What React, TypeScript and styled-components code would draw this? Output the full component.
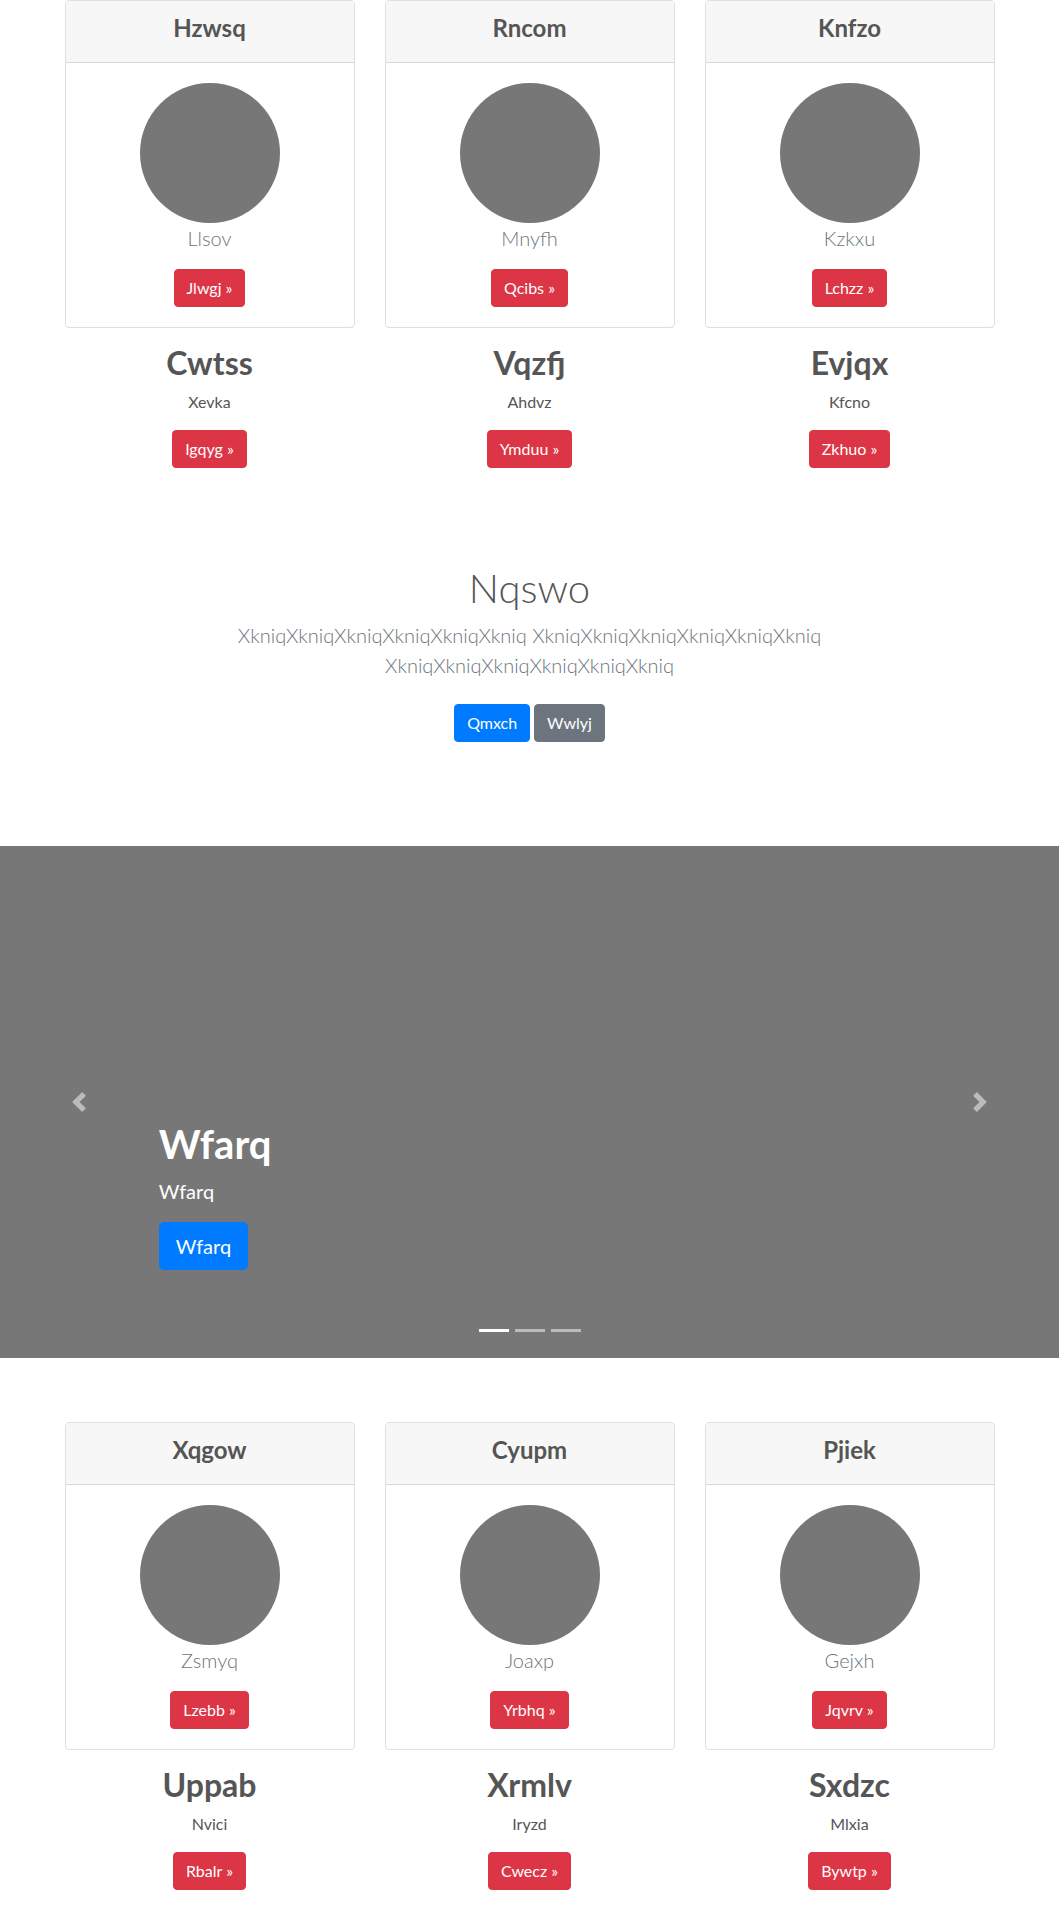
import styled, { createGlobalStyle } from 'styled-components';

const GlobalStyle = createGlobalStyle`
  * {
    box-sizing: border-box;
  }
  body {
    margin: 0;
    font-family: 'Lato', 'Open Sans', sans-serif;
    color: #555;
    background: #fff;
    line-height: 1.5;
  }
`;

const Container = styled.div`
  max-width: 960px;
  margin: 0 auto;
  padding: 0 15px;
`;

const Row = styled.div`
  display: grid;
  grid-template-columns: repeat(3, 1fr);
  column-gap: 30px;
`;

const Col = styled.div`
  text-align: center;
`;

const Card = styled.div`
  border: 1px solid rgba(0, 0, 0, 0.125);
  border-radius: 4px;
  margin-bottom: 16px;
  overflow: hidden;
`;

const CardHeader = styled.div`
  padding: 13px 20px 11px;
  background: #f7f7f7;
  border-bottom: 1px solid rgba(0, 0, 0, 0.125);
  h4 {
    margin: 0 0 8px;
    font-size: 24px;
    font-weight: 700;
    line-height: 1.2;
  }
`;

const CardBody = styled.div`
  padding: 20px;
`;

const Avatar = styled.div`
  width: 140px;
  height: 140px;
  border-radius: 50%;
  background: #777;
  margin: 0 auto;
`;

const Lead = styled.p`
  margin: 0 0 16px;
  font-size: 20px;
  font-weight: 300;
  line-height: 1.5;
  color: #6c757d;
`;

const colors = {
  danger: '#dc3545',
  primary: '#007bff',
  secondary: '#6c757d',
};

const Button = styled.a<{ $variant: keyof typeof colors; $lg?: boolean }>`
  display: inline-block;
  padding: ${(p) => (p.$lg ? '8px 16px' : '6px 12px')};
  font-size: ${(p) => (p.$lg ? '20px' : '16px')};
  line-height: 1.5;
  border-radius: ${(p) => (p.$lg ? '4.8px' : '4px')};
  border: 1px solid ${(p) => colors[p.$variant]};
  background: ${(p) => colors[p.$variant]};
  color: #fff;
  text-decoration: none;
  cursor: pointer;
`;

const Feature = styled.div`
  h2 {
    margin: 0 0 8px;
    font-size: 32px;
    font-weight: 700;
    line-height: 1.2;
  }
  p {
    margin: 0 0 16px;
  }
  p:last-child {
    margin: 0;
  }
`;

const Jumbotron = styled.section`
  padding: 96px 0;
  text-align: center;
`;

const JumboInner = styled.div`
  max-width: 600px;
  margin: 0 auto;
  h1 {
    margin: 0 0 8px;
    font-size: 40px;
    font-weight: 300;
    line-height: 1.2;
  }
`;

const Actions = styled.div`
  display: flex;
  justify-content: center;
  gap: 4px;
  padding: 8px 0;
`;

const Carousel = styled.div`
  position: relative;
  height: 512px;
  background: #777;
  margin-bottom: 64px;
`;

const Caption = styled.div`
  position: absolute;
  left: 15%;
  right: 15%;
  bottom: 52px;
  padding: 20px 0;
  color: #fff;
  h1 {
    margin: 0 0 8px;
    font-size: 40px;
    font-weight: 700;
    line-height: 1.2;
  }
  p {
    margin: 0 0 16px;
    font-size: 20px;
  }
`;

const Control = styled.a<{ $side: 'left' | 'right' }>`
  position: absolute;
  top: 0;
  bottom: 0;
  ${(p) => p.$side}: 0;
  width: 15%;
  display: flex;
  align-items: center;
  justify-content: center;
  opacity: 0.5;
  svg {
    width: 20px;
    height: 20px;
  }
`;

const Indicators = styled.ol`
  position: absolute;
  left: 15%;
  right: 15%;
  bottom: 26px;
  margin: 0;
  padding: 0;
  list-style: none;
  display: flex;
  justify-content: center;
  gap: 6px;
`;

const Indicator = styled.li<{ $active?: boolean }>`
  width: 30px;
  height: 3px;
  background: #fff;
  opacity: ${(p) => (p.$active ? 1 : 0.5)};
`;

type Item = {
  title: string;
  name: string;
  cta: string;
  heading: string;
  sub: string;
  action: string;
};

const topRow: Item[] = [
  { title: 'Hzwsq', name: 'Llsov', cta: 'Jlwgj', heading: 'Cwtss', sub: 'Xevka', action: 'Igqyg' },
  { title: 'Rncom', name: 'Mnyfh', cta: 'Qcibs', heading: 'Vqzfj', sub: 'Ahdvz', action: 'Ymduu' },
  { title: 'Knfzo', name: 'Kzkxu', cta: 'Lchzz', heading: 'Evjqx', sub: 'Kfcno', action: 'Zkhuo' },
];

const bottomRow: Item[] = [
  { title: 'Xqgow', name: 'Zsmyq', cta: 'Lzebb', heading: 'Uppab', sub: 'Nvici', action: 'Rbalr' },
  { title: 'Cyupm', name: 'Joaxp', cta: 'Yrbhq', heading: 'Xrmlv', sub: 'Iryzd', action: 'Cwecz' },
  { title: 'Pjiek', name: 'Gejxh', cta: 'Jqvrv', heading: 'Sxdzc', sub: 'Mlxia', action: 'Bywtp' },
];

const Chevron = ({ flip }: { flip?: boolean }) => (
  <svg viewBox="0 0 8 8" fill="#fff" style={flip ? { transform: 'scaleX(-1)' } : undefined}>
    <path d="M5.25 0l-4 4 4 4 1.5-1.5L4.25 4l2.5-2.5L5.25 0z" />
  </svg>
);

const CardRow = ({ items }: { items: Item[] }) => (
  <Container>
    <Row>
      {items.map((item) => (
        <Col key={item.title}>
          <Card>
            <CardHeader>
              <h4>{item.title}</h4>
            </CardHeader>
            <CardBody>
              <Avatar />
              <Lead>{item.name}</Lead>
              <Button $variant="danger">{item.cta} &raquo;</Button>
            </CardBody>
          </Card>
          <Feature>
            <h2>{item.heading}</h2>
            <p>{item.sub}</p>
            <p>
              <Button $variant="danger">{item.action} &raquo;</Button>
            </p>
          </Feature>
        </Col>
      ))}
    </Row>
  </Container>
);

const App = () => {
  const word = 'Xkniq'.repeat(6);
  return (
    <>
      <GlobalStyle />
      <CardRow items={topRow} />
      <Jumbotron>
        <JumboInner>
          <h1>Nqswo</h1>
          <Lead>
            {word} {word} {word}
          </Lead>
          <Actions>
            <Button $variant="primary">Qmxch</Button>
            <Button $variant="secondary">Wwlyj</Button>
          </Actions>
        </JumboInner>
      </Jumbotron>
      <Carousel>
        <Caption>
          <h1>Wfarq</h1>
          <p>Wfarq</p>
          <p>
            <Button $variant="primary" $lg>
              Wfarq
            </Button>
          </p>
        </Caption>
        <Control $side="left">
          <Chevron />
        </Control>
        <Control $side="right">
          <Chevron flip />
        </Control>
        <Indicators>
          <Indicator $active />
          <Indicator />
          <Indicator />
        </Indicators>
      </Carousel>
      <CardRow items={bottomRow} />
    </>
  );
};

export default App;
